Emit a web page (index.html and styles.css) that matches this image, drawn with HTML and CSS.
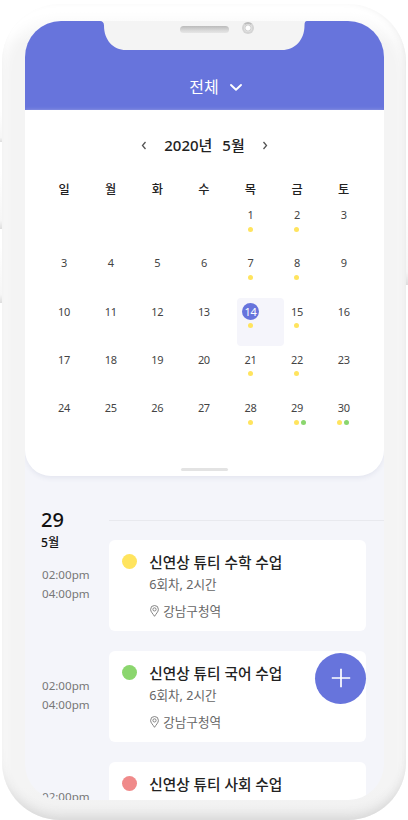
FILE: index.html
```html
<!DOCTYPE html>
<html lang="ko">
<head>
<meta charset="utf-8">
<title>수업 일정</title>
<link rel="stylesheet" href="styles.css">
</head>
<body>
<i class="side left mute"></i><i class="side left up"></i><i class="side left down"></i><i class="side right"></i>
<div class="phone">
  <div class="screen">
    <header class="topbar">
      <span>전체</span>
      <svg width="14" height="9" viewBox="0 0 14 9"><path d="M2 2l5 4.800L12 2" fill="none" stroke="#fff" stroke-width="1.900" stroke-linecap="round" stroke-linejoin="round"/></svg>
    </header>
    <section class="calendar">
      <div class="month">
        <svg width="6" height="9" viewBox="0 0 6 9"><path d="M4.500 1L1.500 4.500l3 3.500" fill="none" stroke="#555" stroke-width="1.300"/></svg>
        <h1><span>2020년</span><span>5월</span></h1>
        <svg width="6" height="9" viewBox="0 0 6 9"><path d="M1.500 1l3 3.500L1.500 8" fill="none" stroke="#555" stroke-width="1.300"/></svg>
      </div>
      <div class="week"><b>일</b><b>월</b><b>화</b><b>수</b><b>목</b><b>금</b><b>토</b></div>
      <div class="days" id="days"></div>
      <div class="handle"></div>
    </section>
    <main class="agenda">
      <div class="day-head">
        <div class="day-label"><strong>29</strong><span>5월</span></div>
        <div class="rule"></div>
      </div>
      <div class="list" id="list"></div>
    </main>
    <button class="add" aria-label="추가"><svg width="20" height="20" viewBox="0 0 20 20"><path d="M10 .8v18.400M.8 10h18.400" stroke="#fff" stroke-width="1.700"/></svg></button>
  </div>
  <svg class="notch" width="207" height="30" viewBox="0 0 207 30">
    <path d="M0 0C2.500 0 4 1.500 4 4.500C4 19 13 29 26 29H182C195 29 204.500 19 204.500 4.500C204.500 1.500 205 0 207 0Z" fill="#f4f4f4"/>
  </svg>
  <div class="speaker"></div>
  <div class="camera"></div>
</div>
<script src="app.js"></script>
</body>
</html>
```
FILE: styles.css
```css
* { box-sizing: border-box; }
body {
  margin: 0;
  width: 408px;
  height: 820px;
  position: relative;
  overflow: hidden;
  background: #fff;
  color: #222;
  font-family: "Noto Sans", "Noto Sans CJK KR", sans-serif;
}
svg { display: block; }
.side { position: absolute; width: 3px; background: linear-gradient(#fff, #f6f6f6 85%, #ddd); }
.left { left: 0; }
.right { right: 0; top: 197px; height: 88px; }
.mute { top: 112px; height: 30px; }
.up { top: 172px; height: 57px; }
.down { top: 246px; height: 57px; }
.phone {
  position: relative;
  width: 404px;
  height: 816px;
  margin: 4px 0 0 2px;
  padding: 17px 22px 20px 23px;
  border-radius: 58px;
  background: linear-gradient(#fff, #fdfdfd 8px, #f4f4f4 40px, #f4f4f4 96%, #f0f0f0);
  box-shadow: inset 0 -10px 12px -6px #d6d6d6, inset -4px 0 8px -4px #e8e8e8, inset 0 12px 14px #fff;
}
.screen {
  position: relative;
  width: 359px;
  height: 779px;
  overflow: hidden;
  border-radius: 36px;
  background: #f4f5fa;
}
.topbar {
  height: 89px;
  padding: 46px 0 0 23px;
  display: flex;
  justify-content: center;
  gap: 10px;
  background: #6774dc;
  color: #fff;
  font-size: 16px;
  line-height: 40px;
}
.topbar svg { margin-top: 16px; }
.calendar {
  position: relative;
  height: 366px;
  padding-top: 18px;
  background: #fff;
  border-radius: 0 0 26px 26px;
  box-shadow: 0 2px 5px #e3e5ef;
}
.month {
  display: flex;
  align-items: center;
  justify-content: center;
  gap: 17px;
  height: 35px;
}
.month h1 { display: flex; gap: 10px; margin: 0; font-size: 15px; font-weight: 500; line-height: 35px; }
.week, .days { display: grid; grid-template-columns: repeat(7, 46.600px); margin-left: 25.600px; }
.week { margin-top: 17px; }
.week b { width: 27px; text-align: center; font-size: 12.200px; font-weight: 500; line-height: 20px; }
.days { margin-top: 1.600px; grid-auto-rows: 48.200px; }
.cell { border-radius: 4px; padding-top: 4.700px; }
.cell.today { background: #f5f5fb; }
.num { display: flex; justify-content: center; width: 17px; height: 17px; margin-left: 5px; border-radius: 50%; font-size: 11px; line-height: 17px; letter-spacing: -.3px; color: #444; }
.today .num { background: #6774dc; color: #fff; }
.dots { display: flex; gap: 1.700px; height: 5px; margin: 3.600px 0 0 10.600px; }
.dots i { width: 5px; height: 5px; border-radius: 50%; }
.cell:nth-child(35) .dots { margin-left: 7px; }
.yellow { background: #ffe45e; }
.green { background: #8bd66e; }
.red { background: #f08a8a; }
.handle { width: 47px; height: 3px; border-radius: 2px; background: #e3e3e3; margin: 25.500px auto 0; }
.agenda { padding-left: 16px; }
.day-head { display: flex; height: 64px; }
.day-label { width: 68px; padding-top: 31px; color: #111; }
.day-label strong { display: block; font-size: 20px; font-weight: 500; line-height: 25px; }
.day-label span { display: block; font-size: 12.200px; font-weight: 500; line-height: 21px; }
.rule { flex: 1; height: 1px; margin-top: 44px; background: #e8e9ee; }
.lesson { display: flex; height: 91px; margin-bottom: 20px; }
.time { width: 67.500px; padding: 25px 0 0 1px; font-size: 11.600px; line-height: 19.300px; color: #777; }
.card { width: 257.500px; padding: 10.500px 0 0 13px; display: flex; gap: 12.700px; border-radius: 6px; background: #fff; }
.card > i { width: 15px; height: 15px; border-radius: 50%; margin-top: 3px; }
.card h2 { margin: 0; font-size: 14.700px; font-weight: 500; line-height: 22px; color: #222; }
.card p { margin: 0; font-size: 12.600px; line-height: 23px; color: #666; }
.card .place { display: flex; align-items: center; gap: 4px; margin-top: 4px; }
.place svg { margin-left: 1px; }
.add {
  position: absolute;
  left: 290px;
  top: 631.500px;
  width: 51px;
  height: 51px;
  padding: 0;
  border: 0;
  border-radius: 50%;
  background: #6774dc;
  display: flex;
  align-items: center;
  justify-content: center;
}
.notch { position: absolute; left: 98px; top: 17px; }
.speaker { position: absolute; left: 178px; top: 22px; width: 49px; height: 7px; border-radius: 4px; background: linear-gradient(#bbb, #d8d8d8 60%, #e6e6e6); }
.camera { position: absolute; left: 240px; top: 18px; width: 12px; height: 12px; border: 2px solid #d4d4d4; border-top-color: #bcbcbc; border-radius: 50%; background: radial-gradient(circle, #fff 0 2px, #cdcdcd 3px, #e8e8e8 4px); }
```
FILE: app.js
```js
const eventCounts = { 1: 1, 2: 1, 7: 1, 8: 1, 14: 1, 15: 1, 21: 1, 22: 1, 28: 1, 29: 2, 30: 2 };
const weeks = [
  ['', '', '', '', 1, 2, 3],
  [3, 4, 5, 6, 7, 8, 9],
  [10, 11, 12, 13, 14, 15, 16],
  [17, 18, 19, 20, 21, 22, 23],
  [24, 25, 26, 27, 28, 29, 30]
];
document.getElementById('days').innerHTML = weeks.flat().map(day => {
  if (!day) return '<div class="cell"></div>';
  const dots = ['yellow', 'green'].slice(0, eventCounts[day] || 0).map(c => `<i class="${c}"></i>`).join('');
  return `<div class="cell${day === 14 ? ' today' : ''}"><span class="num">${day}</span><div class="dots">${dots}</div></div>`;
}).join('');

const lessons = [['yellow', '수학'], ['green', '국어'], ['red', '사회']];
document.getElementById('list').innerHTML = lessons.map(([color, subject]) => `
  <article class="lesson">
    <div class="time">02:00pm<br>04:00pm</div>
    <div class="card"><i class="${color}"></i><div>
      <h2>신연상 튜티 ${subject} 수업</h2>
      <p>6회차, 2시간</p>
      <p class="place"><svg width="9" height="12" viewBox="0 0 9 12"><path d="M4.500 11.300C3 8.800.6 6.800.6 4.400a3.900 3.900 0 0 1 7.800 0C8.400 6.800 6 8.800 4.500 11.300Z" fill="none" stroke="#777" stroke-width=".9"/><circle cx="4.500" cy="4.400" r="1.600" fill="none" stroke="#777" stroke-width=".9"/></svg><span>강남구청역</span></p>
    </div></div>
  </article>`).join('');
```
